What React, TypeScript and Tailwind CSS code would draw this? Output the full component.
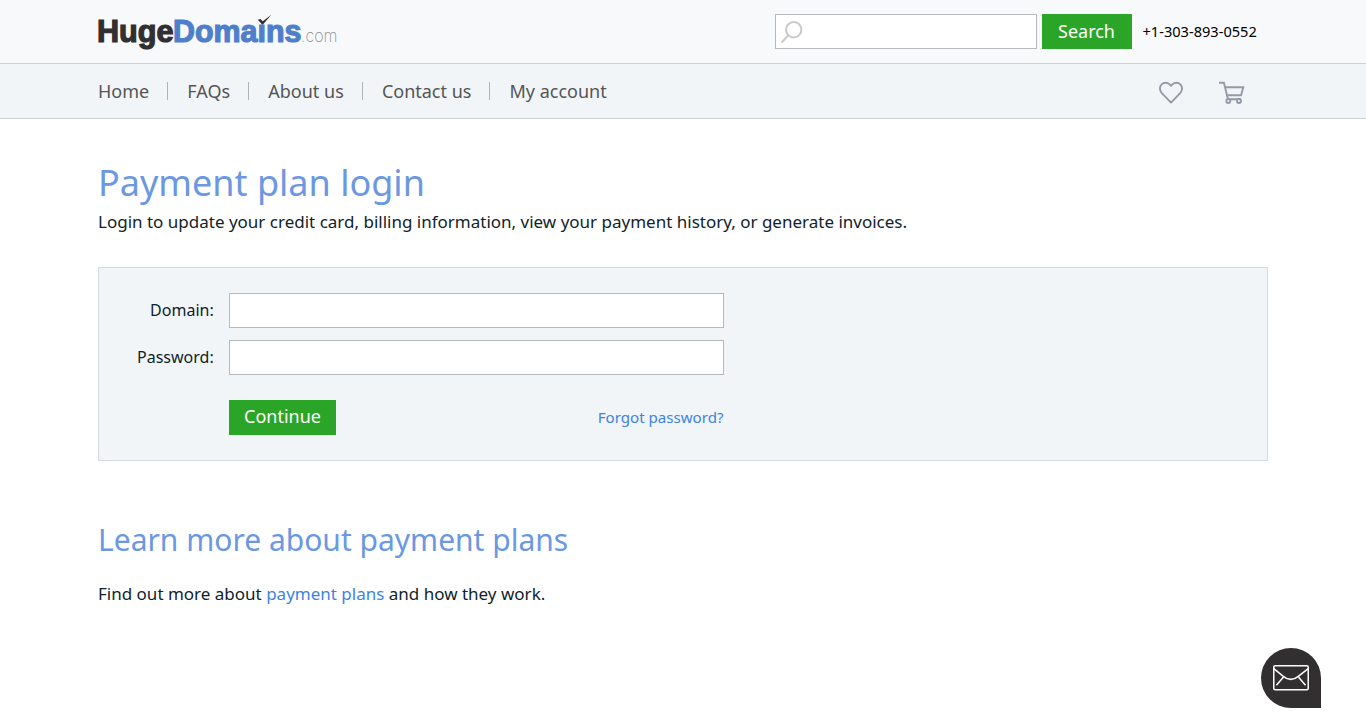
import type { ReactNode } from 'react';

const NAV_LINKS = ['Home', 'FAQs', 'About us', 'Contact us', 'My account'];

function Logo() {
  return (
    <a href="#" aria-label="HugeDomains.com" className="-ml-1 block">
      <svg width="250" height="44" viewBox="-4 0 250 44" className="block">
        <g fontFamily="Liberation Sans, sans-serif" fontWeight="700" fontSize="30.500" strokeWidth="1.200">
          <text x="-1" y="32.300" fill="#322f31" stroke="#322f31" textLength="76.500" lengthAdjust="spacingAndGlyphs">
            Huge
          </text>
          <text x="75" y="32.300" fill="#4f7fcb" stroke="#4f7fcb" textLength="128.500" lengthAdjust="spacingAndGlyphs">
            Domaıns
          </text>
        </g>
        <text
          x="203"
          y="32.300"
          fill="#8d8e92"
          fontFamily="Inter, sans-serif"
          fontWeight="200"
          fontSize="17.500"
          textLength="36.500"
          lengthAdjust="spacingAndGlyphs"
        >
          .com
        </text>
        <path d="M159.800 9.800l2.600-.9 2.400 2.300 8.500-6.400-8.300 9.600h-.9z" fill="#322f31" />
      </svg>
    </a>
  );
}

function SearchIcon() {
  return (
    <svg width="22" height="23" viewBox="0 0 22 23" fill="none" stroke="#c9c9c9" strokeWidth="2">
      <circle cx="12.700" cy="8.700" r="7.700" />
      <path d="M7.300 14.300L1 21.200" strokeLinecap="round" />
    </svg>
  );
}

function HeartIcon() {
  return (
    <svg width="26" height="24" viewBox="0 0 26 24" fill="none" stroke="#949ba6" strokeWidth="1.900">
      <path
        d="M13 22.600L3.600 12.900C1.400 10.500 1.400 6.600 3.600 4.400s5.800-2.200 8 0L13 5.900l1.400-1.500c2.200-2.200 5.800-2.200 8 0s2.200 6.100 0 8.500z"
        strokeLinejoin="round"
      />
    </svg>
  );
}

function CartIcon() {
  return (
    <svg width="26" height="24" viewBox="0 0 26 24" fill="none" stroke="#949ba6" strokeWidth="1.900">
      <path d="M0 2.700h4.900L9 19.200h13" />
      <path d="M6 7.200h18.300L22.100 15.300H8.200" />
      <circle cx="9.300" cy="21" r="2" fill="#f1f5f8" />
      <circle cx="20" cy="21" r="2" fill="#f1f5f8" />
    </svg>
  );
}

function MailIcon() {
  return (
    <svg width="36" height="26" viewBox="0 0 36 26" fill="none" stroke="#fff" strokeWidth="1.500">
      <rect x=".75" y=".75" width="34.500" height="24" rx="1.500" />
      <path d="M.8 3.600L10.300 11.300Q17.800 17.500 25.300 11.300L35.200 3.600M10.300 12.300L3.400 20.200M25.600 12.300l6.900 7.900" />
    </svg>
  );
}

function Field({ id, label, type }: { id: string; label: ReactNode; type: string }) {
  return (
    <div className="flex h-[35px] items-center">
      <label htmlFor={id} className="w-[115px] pr-[0.300px] pb-[2px] text-right text-base text-[#0f232b]">
        {label}
      </label>
      <input
        id={id}
        type={type}
        className="ml-[15px] h-[35px] w-[495px] border border-[#b7b9bc] bg-white px-3 outline-none"
      />
    </div>
  );
}

export default function App() {
  return (
    <div className="min-h-[728px] bg-white font-['Noto_Sans',sans-serif] text-[#0f232b]">
      <header className="h-16 border-b border-[#cdd0d8] bg-[#f8f9fb]">
        <div className="mx-auto flex w-[1170px] items-start pt-[10px]">
          <Logo />
          <form className="ml-[431px] flex pt-1" onSubmit={(e) => e.preventDefault()}>
            <div className="flex h-[35px] w-[262px] items-start border border-[#b7b9bc] bg-white pt-[6px] pl-[5px]">
              <SearchIcon />
              <input aria-label="Search domains" className="w-[220px] px-2 outline-none" />
            </div>
            <button className="ml-[5px] h-[35px] w-[90px] bg-[#2aa527] pr-2 pb-[2px] pl-[7px] text-lg text-white">
              Search
            </button>
          </form>
          <span className="ml-[10.500px] pt-1 text-[14.600px] leading-[35px] text-black">+1-303-893-0552</span>
        </div>
      </header>

      <div className="h-[55px] border-b border-[#cdd0d8] bg-[#f1f5f8]">
        <div className="mx-auto flex h-[54px] w-[1170px] items-center justify-between">
          <nav className="flex items-center text-lg text-[#555]">
            {NAV_LINKS.map((name, i) => (
              <div key={name} className="flex items-center">
                {i > 0 && <span className="mr-[19.300px] ml-[17.820px] h-[18px] w-px bg-[#b0b3b6]" />}
                <a href="#">{name}</a>
              </div>
            ))}
          </nav>
          <div className="mr-[23px] flex items-center gap-[35px] pt-[2px]">
            <a href="#" aria-label="Favorites"><HeartIcon /></a>
            <a href="#" aria-label="Cart"><CartIcon /></a>
          </div>
        </div>
      </div>

      <main className="mx-auto w-[1170px] pt-[39px]">
        <h1 className="text-[36px] leading-[50px] text-[#6b97e3]">Payment plan login</h1>
        <p className="mt-px text-[17px] leading-[26px]">
          Login to update your credit card, billing information, view your payment history, or generate invoices.
        </p>

        <form
          className="mt-8 h-[194px] border border-[#d6dbe1] bg-[#f1f5f8] pt-[25px]"
          onSubmit={(e) => e.preventDefault()}
        >
          <div className="flex flex-col gap-3">
            <Field id="domain" label="Domain:" type="text" />
            <Field id="password" label="Password:" type="password" />
          </div>
          <div className="mt-[25px] ml-[130px] flex w-[495px] items-center justify-between">
            <button className="h-[35px] w-[107px] bg-[#2aa527] pb-[3px] text-lg text-white">Continue</button>
            <a href="#" className="pr-[0.500px] text-[15.100px] text-[#3f83e0]">
              Forgot password?
            </a>
          </div>
        </form>

        <h2 className="mt-[57px] text-[30px] leading-[44px] text-[#6b97e3]">Learn more about payment plans</h2>
        <p className="mt-[19px] text-[17px] leading-[26px]">
          Find out more about <a href="#" className="text-[#3f83e0]">payment plans</a> and how they work.
        </p>
      </main>

      <button
        aria-label="Contact support"
        className="fixed right-[45px] bottom-[20px] flex h-[60px] w-[60px] items-center justify-center rounded-full rounded-br-none bg-[#322f31]"
      >
        <MailIcon />
      </button>
    </div>
  );
}
